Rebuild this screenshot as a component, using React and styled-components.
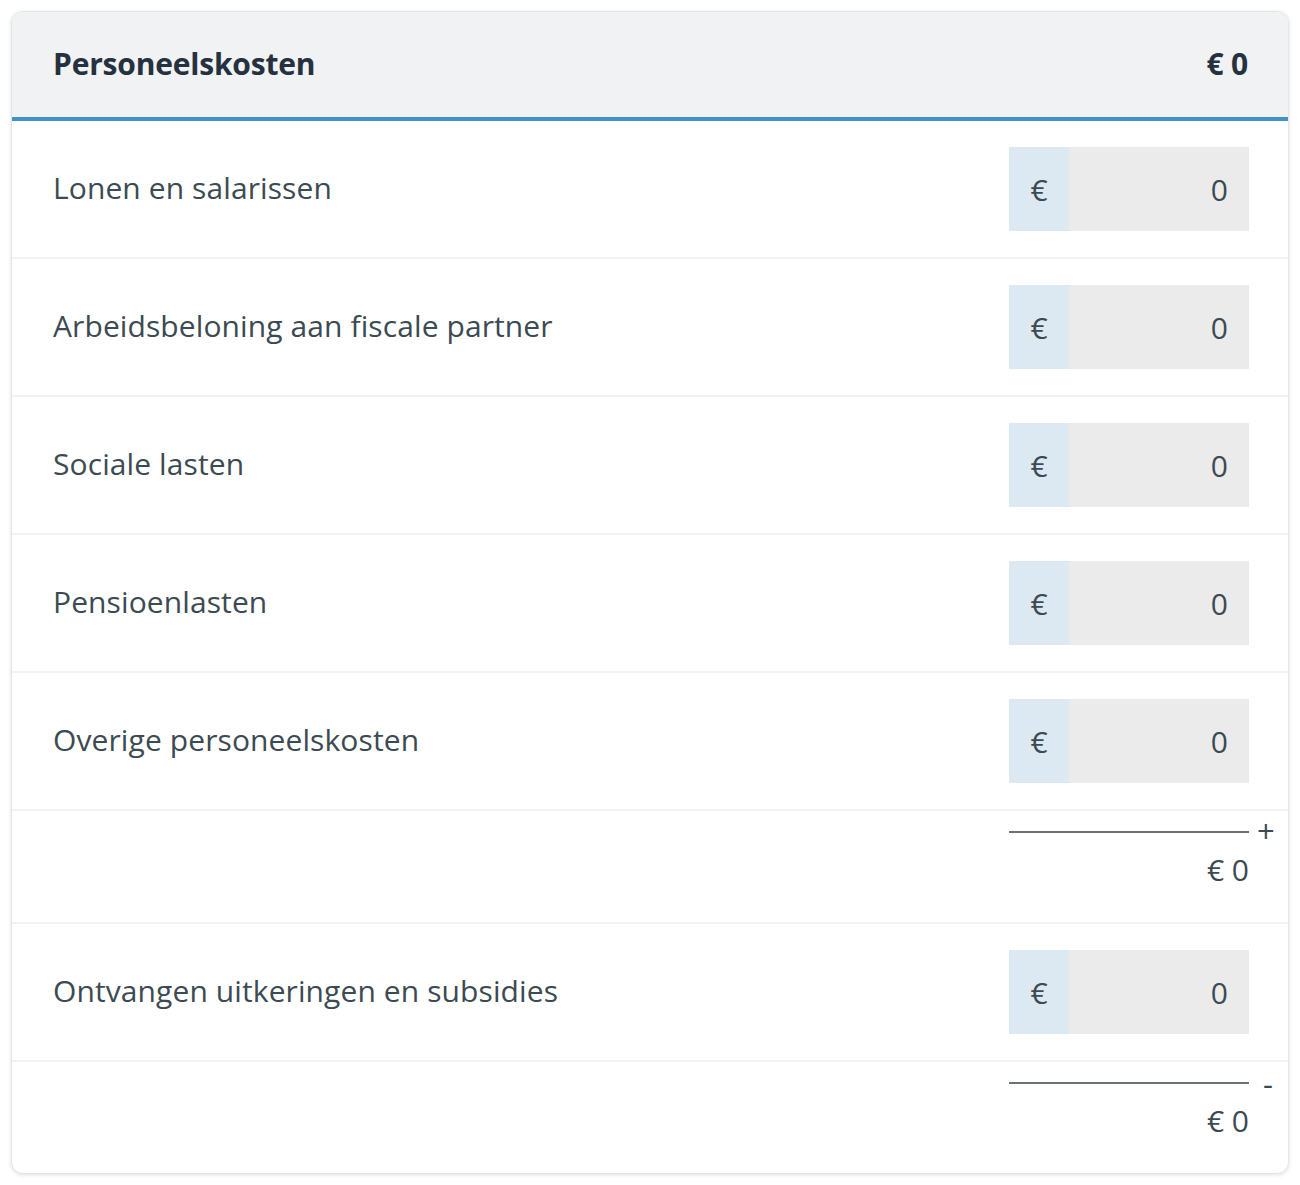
import React from "react";
import styled, { createGlobalStyle } from "styled-components";

const GlobalStyle = createGlobalStyle`
  html, body { margin: 0; padding: 0; background: #ffffff; }
  body { font-family: "Source Sans Pro", "Open Sans", "Noto Sans", sans-serif; }
  * { box-sizing: border-box; }
`;

const Page = styled.div`
  padding: 11px;
`;

const Card = styled.section`
  border: 1px solid #e3e5e8;
  border-radius: 12px;
  overflow: hidden;
  background: #ffffff;
  box-shadow: 0 1px 4px rgba(0, 0, 0, 0.12);
`;

const Header = styled.header`
  display: flex;
  align-items: center;
  justify-content: space-between;
  height: 109px;
  padding: 0 40px 2px 41px;
  background: #f0f2f4;
  border-bottom: 4px solid #3d93c6;
  color: #263140;
  font-weight: 700;
  font-size: 30px;
  letter-spacing: -0.2px;
`;

const Row = styled.div`
  display: flex;
  align-items: center;
  justify-content: space-between;
  padding: 26px 39px 26px 41px;
  border-bottom: ${(p) => (p.$last ? "none" : "2px solid #f1f2f3")};
`;

const Label = styled.span`
  font-size: 30px;
  letter-spacing: 0.1px;
  color: #3c4a52;
  margin-top: -4px;
`;

const Amount = styled.div`
  display: flex;
  width: 240px;
  height: 84px;
  font-size: 30px;
  color: #3c4a52;
`;

const Prefix = styled.span`
  display: flex;
  align-items: center;
  justify-content: center;
  width: 60px;
  background: #dce9f3;
`;

const Field = styled.span`
  flex: 1;
  display: flex;
  align-items: center;
  justify-content: flex-end;
  padding-right: 21px;
  background: #ebebeb;
`;

const TotalRow = styled(Row)`
  justify-content: flex-end;
  padding-top: 20px;
  padding-bottom: 0;
  height: ${(p) => (p.$last ? "111px" : "113px")};
  align-items: flex-start;
`;

const TotalBlock = styled.div`
  position: relative;
  width: 240px;
  border-top: 2px solid #6b7175;
  text-align: right;
  font-size: 30px;
  line-height: 36px;
  padding-top: 19px;
  color: #3c4a52;
`;

const Sign = styled.span`
  position: absolute;
  left: calc(100% + ${(p) => (p.$minus ? "14px" : "8px")});
  top: ${(p) => (p.$minus ? "-19px" : "-20px")};
  font-size: 31px;
  line-height: 36px;
  color: #3c4a52;
`;

const items = [
  "Lonen en salarissen",
  "Arbeidsbeloning aan fiscale partner",
  "Sociale lasten",
  "Pensioenlasten",
  "Overige personeelskosten",
];

function AmountInput() {
  return (
    <Amount>
      <Prefix>€</Prefix>
      <Field>0</Field>
    </Amount>
  );
}

export default function App() {
  return (
    <Page>
      <GlobalStyle />
      <Card>
        <Header>
          <span>Personeelskosten</span>
          <span>€ 0</span>
        </Header>
        {items.map((label) => (
          <Row key={label}>
            <Label>{label}</Label>
            <AmountInput />
          </Row>
        ))}
        <TotalRow>
          <TotalBlock>
            <Sign>+</Sign>€ 0
          </TotalBlock>
        </TotalRow>
        <Row>
          <Label>Ontvangen uitkeringen en subsidies</Label>
          <AmountInput />
        </Row>
        <TotalRow $last>
          <TotalBlock>
            <Sign $minus>-</Sign>€ 0
          </TotalBlock>
        </TotalRow>
      </Card>
    </Page>
  );
}
